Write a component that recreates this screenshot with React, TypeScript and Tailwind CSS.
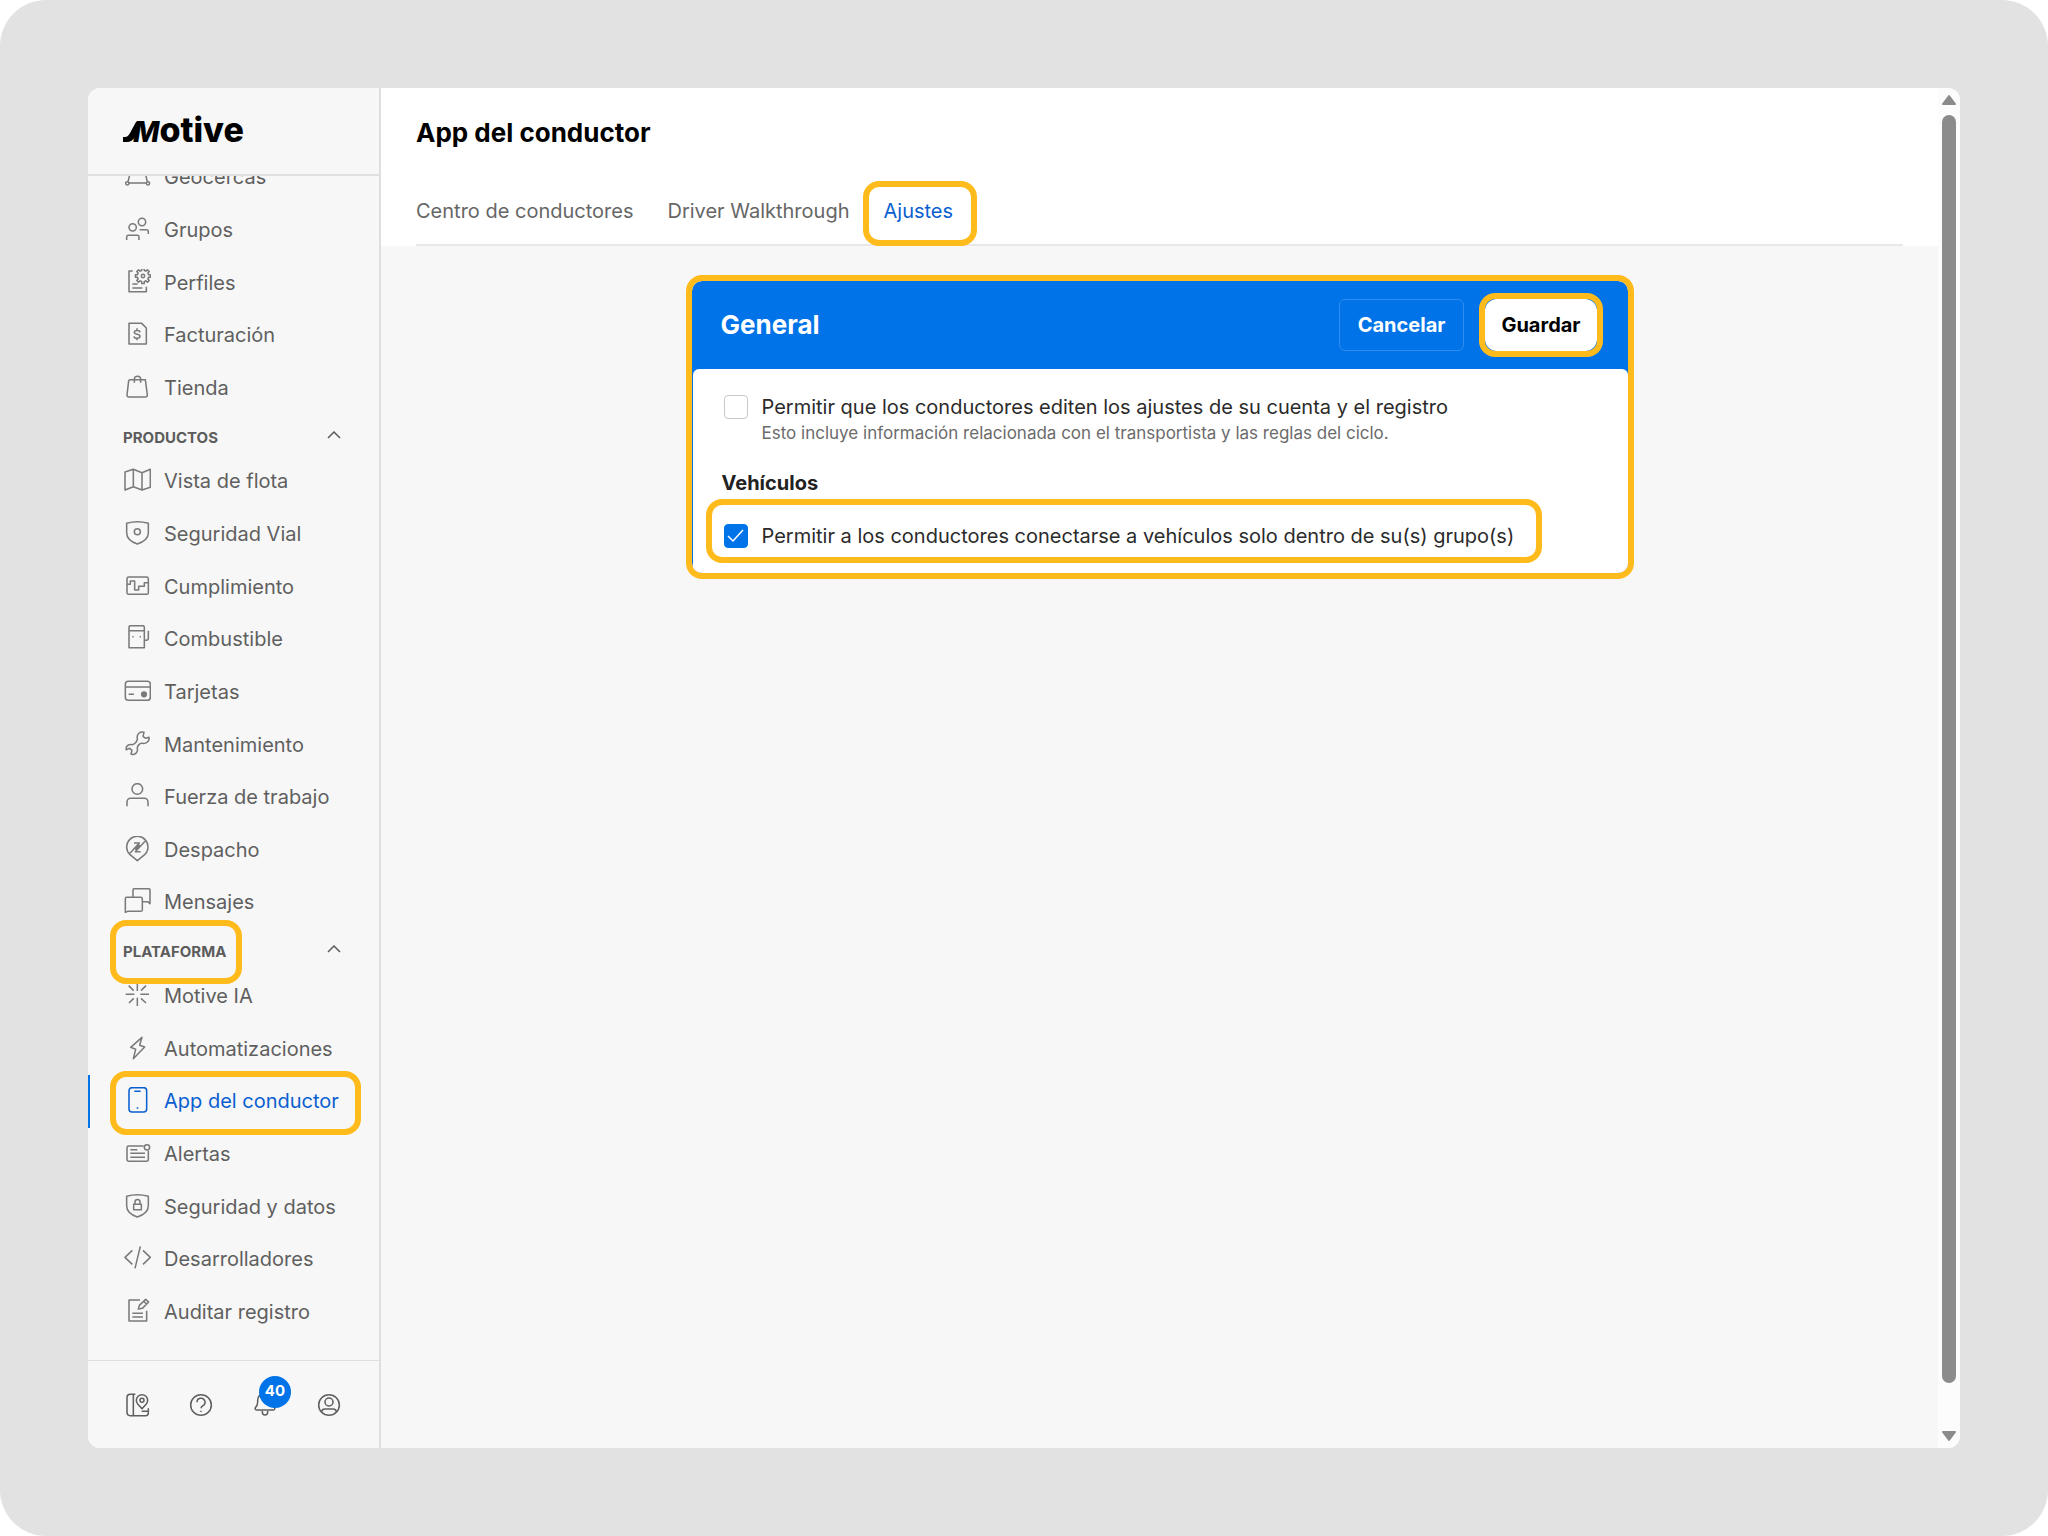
import { useState } from "react";
import type { ReactNode } from "react";
import clsx from "clsx";

const gearPath = (cx: number, cy: number) => {
  const points: string[] = [];
  for (let i = 0; i < 8; i++) {
    const tooth: [number, number][] = [
      [-14, 17],
      [-9, 23],
      [9, 23],
      [14, 17],
    ];
    tooth.forEach(([offset, radius]) => {
      const angle = ((i * 45 + offset) * Math.PI) / 180;
      points.push(
        `${(cx + Math.sin(angle) * radius).toFixed(1)} ${(cy - Math.cos(angle) * radius).toFixed(1)}`,
      );
    });
  }
  return `M${points.join("L")}Z`;
};

const SHIELD = "M11 10Q43 1 76 10V38C76 56 60 66 43 72C26 66 11 56 11 38Z";

const icons: Record<string, ReactNode> = {
  geofence: (
    <>
      <circle cx="13" cy="61" r="5" />
      <circle cx="75" cy="61" r="5" />
      <path d="M18 60H70M15 56L24 20M73 56L64 20" />
    </>
  ),
  groups: (
    <>
      <circle cx="29" cy="34" r="11" />
      <circle cx="57" cy="18" r="11" />
      <path d="M11 72V63a5 5 0 0 1 5-5H43a5 5 0 0 1 5 5V72M50 41H70a6 6 0 0 1 6 6V54" />
    </>
  ),
  profiles: (
    <>
      <path d="M29 6H18V68H70V53M28 45H44M28 57H58" />
      <path d={gearPath(60, 21)} />
      <circle cx="60" cy="21" r="5" />
    </>
  ),
  billing: (
    <path d="M18 7H56L70 21V69H18ZM51 34C50 27 34 27 34 34C34 42 51 38 51 46C51 54 34 54 33 46M42 22V29M42 52V58" />
  ),
  store: (
    <path d="M20 17H67L73 63Q73 69 67 69H18Q12 69 12 63L17 20Q18 17 21 17M34 26V16a9 9 0 0 1 19 0V26" />
  ),
  map: <path d="M6 15L31 7L57 17L82 7V61L57 69L31 59L6 69ZM31 7V59M57 17V69" />,
  safety: (
    <>
      <path d={SHIELD} />
      <circle cx="43" cy="35" r="9" />
    </>
  ),
  compliance: (
    <>
      <rect x="12" y="12" width="64" height="52" rx="5" />
      <path d="M12 34H22V24H35V51H47V40H64V29H76" />
    </>
  ),
  fuel: (
    <>
      <path d="M18 68V7q0-5 5-5h36q5 0 5 5V68ZM18 17H64M66 46H70a6 6 0 0 0 6-6V17" />
      <path d="M28 35H32M50 35H54" />
    </>
  ),
  cards: (
    <>
      <rect x="7" y="10" width="75" height="57" rx="9" />
      <path d="M7 27H82M17 49H33" />
      <circle cx="63" cy="49" r="7" fill="currentColor" />
    </>
  ),
  wrench: (
    <path d="M63 4C52 0 40 9 43 23C44 29 36 40 28 41C16 39 7 46 10 56L20 52L27 58L24 69C34 74 46 64 43 53C42 45 50 36 58 37C70 39 80 30 78 19L68 22L60 16Z" />
  ),
  person: (
    <>
      <circle cx="43" cy="18" r="16" />
      <path d="M12 70V57a11 11 0 0 1 11-11H64a11 11 0 0 1 11 11V70" />
    </>
  ),
  dispatch: (
    <path d="M43 74L20 55A32 32 0 1 1 66 55ZM21 52L49 21H33M66 16L37 47H53M50 26L37 41" />
  ),
  messages: (
    <path d="M7 73V32a4 4 0 0 1 4-4H53a5 5 0 0 1 5 5V65a5 5 0 0 1-5 5H14ZM30 26V6a4 4 0 0 1 4-4H77a4 4 0 0 1 4 4V47L74 41H60" />
  ),
  spark: (
    <path d="M8 37H34M52 37H78M43 3V27M43 47V72M17 11L32 26M69 11L54 26M18 63L32 49M69 63L54 49" />
  ),
  bolt: <path d="M57 7L23 37L38 43L31 71L65 36L50 31Z" />,
  phone: (
    <>
      <rect x="18" y="2" width="53" height="73" rx="9" />
      <path d="M34 13H53M41 63H46" />
    </>
  ),
  alerts: (
    <>
      <path d="M62 18H17a5 5 0 0 0-5 5V58a6 6 0 0 0 6 6H70a6 6 0 0 0 6-6V32M22 29H43M22 40H66M22 52H66" />
      <circle cx="72" cy="22" r="8" />
    </>
  ),
  security: (
    <>
      <path d={SHIELD} />
      <rect x="32" y="34" width="23" height="16" />
      <path d="M36 34V27a7 7 0 0 1 15 0v7" />
    </>
  ),
  code: <path d="M28 16L6 37L28 58M60 16L82 37L60 58M52 4L36 70" />,
  audit: (
    <path d="M51 6H18V69H71V38M28 46H60M28 57H60M46 33L49 22L68 4L77 12L58 31ZM62 10L71 18" />
  ),
  guide: (
    <>
      <path d="M37 10H22a10 10 0 0 0-10 10V64a10 10 0 0 0 10 10H68a8 8 0 0 0 8-8V52M31 10V74M56 61H76" />
      <path d="M57 53L44 39A17 17 0 1 1 70 39Z" />
      <circle cx="57" cy="28" r="6" />
    </>
  ),
  help: (
    <>
      <circle cx="42" cy="42" r="31" />
      <path d="M30 34a12 12 0 1 1 18 10q-6 4-6 8M42 59V63" />
    </>
  ),
  bell: (
    <path d="M13 50Q20 44 20 34V28a22 22 0 0 1 44 0v6Q64 44 71 50Q73 57 66 57H18Q11 57 13 50ZM34 60v4a8 8 0 0 0 16 0v-4" />
  ),
  account: (
    <>
      <circle cx="42" cy="42" r="31" />
      <circle cx="42" cy="33" r="12" />
      <path d="M20 64Q20 54 30 54H54Q64 54 64 64" />
    </>
  ),
};

const Icon = ({ name }: { name: string }) => (
  <svg
    viewBox="0 0 84 84"
    className="size-7 shrink-0"
    fill="none"
    stroke="currentColor"
    strokeWidth="4.6"
    strokeLinejoin="round"
    aria-hidden="true"
  >
    {icons[name]}
  </svg>
);

const sections = [
  {
    title: "",
    items: [
      { label: "Geocercas", icon: "geofence" },
      { label: "Grupos", icon: "groups" },
      { label: "Perfiles", icon: "profiles" },
      { label: "Facturación", icon: "billing" },
      { label: "Tienda", icon: "store" },
    ],
  },
  {
    title: "PRODUCTOS",
    items: [
      { label: "Vista de flota", icon: "map" },
      { label: "Seguridad Vial", icon: "safety" },
      { label: "Cumplimiento", icon: "compliance" },
      { label: "Combustible", icon: "fuel" },
      { label: "Tarjetas", icon: "cards" },
      { label: "Mantenimiento", icon: "wrench" },
      { label: "Fuerza de trabajo", icon: "person" },
      { label: "Despacho", icon: "dispatch" },
      { label: "Mensajes", icon: "messages" },
    ],
  },
  {
    title: "PLATAFORMA",
    marked: true,
    items: [
      { label: "Motive IA", icon: "spark" },
      { label: "Automatizaciones", icon: "bolt" },
      { label: "App del conductor", icon: "phone", active: true },
      { label: "Alertas", icon: "alerts" },
      { label: "Seguridad y datos", icon: "security" },
      { label: "Desarrolladores", icon: "code" },
      { label: "Auditar registro", icon: "audit" },
    ],
  },
];

// Yellow frame that points out a step
const Callout = ({ className }: { className: string }) => (
  <span
    aria-hidden="true"
    className={clsx(
      "pointer-events-none absolute z-10 rounded-2xl border-[6px] border-[#ffbb1c]",
      className,
    )}
  />
);

const Logo = () => (
  <a href="#" className="flex items-baseline text-[34px] leading-9 font-extrabold text-black">
    <svg viewBox="0 0 16 20" className="-mr-1.5 h-5 w-4" aria-hidden="true">
      <path d="M0 15H2Q5 15 7 11L13 0H16V8L12 15Q9 20 4 20H0Z" fill="currentColor" />
    </svg>
    <span>
      <span className="text-[28px] italic">M</span>otive
    </span>
  </a>
);

const Sidebar = () => (
  <aside className="flex w-[293px] shrink-0 flex-col border-r-2 border-[#dfdfdf] bg-[#f7f7f7]">
    <div className="flex h-[88px] shrink-0 items-center border-b-2 border-[#dfdfdf] pl-[35px]">
      <Logo />
    </div>

    <nav className="flex flex-1 flex-col overflow-hidden">
      <div className="-mt-[25px] flex flex-1 flex-col pb-[22px]">
        {sections.map((section) => (
          <div key={section.title} className="contents">
            {section.title && (
              <button className="flex h-[41px] shrink-0 items-center justify-between pr-[38px] pl-[35px] text-[#5c5c5c]">
                <span className="relative mt-1.5 text-[15px] leading-6 font-bold">
                  {section.title}
                  {section.marked && (
                    <Callout className="-top-5 -right-4 -bottom-5 -left-[13px]" />
                  )}
                </span>
                <svg
                  viewBox="0 0 14 8"
                  className="h-2 w-3.5"
                  fill="none"
                  stroke="currentColor"
                  strokeWidth="1.5"
                  aria-hidden="true"
                >
                  <path d="M1 7L7 1L13 7" />
                </svg>
              </button>
            )}
            {section.items.map((item) => (
              <a
                key={item.label}
                href="#"
                className={clsx(
                  "relative flex min-h-10 flex-1 items-center gap-[13px] pl-[35px] text-xl leading-7",
                  item.active ? "text-[#0a5fd0]" : "text-[#5f5f5f]",
                )}
              >
                {item.active && (
                  <>
                    <span className="absolute inset-y-0 left-0 w-0.5 bg-[#0073e8]" />
                    <Callout className="-top-1 right-[18px] -bottom-[7px] left-[22px]" />
                  </>
                )}
                <span className={clsx("flex", !item.active && "text-[#7a7a7a]")}>
                  <Icon name={item.icon} />
                </span>
                <span>{item.label}</span>
              </a>
            ))}
          </div>
        ))}
      </div>
    </nav>

    <div className="flex h-[88px] shrink-0 items-center gap-9 border-t border-[#dfdfdf] pl-[35px] text-[#5f5f5f]">
      <button aria-label="Guía">
        <Icon name="guide" />
      </button>
      <button aria-label="Ayuda">
        <Icon name="help" />
      </button>
      <button aria-label="Notificaciones" className="relative">
        <Icon name="bell" />
        <span className="absolute -top-[15px] left-2 flex size-8 items-center justify-center rounded-full bg-[#0073e8] text-[15px] font-bold text-white">
          40
        </span>
      </button>
      <button aria-label="Cuenta">
        <Icon name="account" />
      </button>
    </div>
  </aside>
);

const tabs = ["Centro de conductores", "Driver Walkthrough", "Ajustes"];

const Header = () => (
  <header className="bg-white px-[35px] pt-[29px]">
    <h1 className="text-[26px] leading-8 font-bold text-black">App del conductor</h1>
    <div className="mt-[47px] flex gap-[34px] border-b-2 border-[#e8e8e8] pb-[18px]">
      {tabs.map((tab) => (
        <button
          key={tab}
          className={clsx(
            "relative text-xl leading-[30px]",
            tab === "Ajustes" ? "text-[#0a5fd0]" : "text-[#666666]",
          )}
        >
          {tab}
          {tab === "Ajustes" && <Callout className="-top-[15px] -right-6 -bottom-5 -left-5" />}
        </button>
      ))}
    </div>
  </header>
);

type CheckProps = {
  id: string;
  checked: boolean;
  onChange: (checked: boolean) => void;
};

const Check = ({ id, checked, onChange }: CheckProps) => (
  <span className="relative flex size-6 shrink-0">
    <input
      id={id}
      type="checkbox"
      checked={checked}
      onChange={(e) => onChange(e.target.checked)}
      className="size-6 cursor-pointer appearance-none rounded-sm border border-[#c8c8c8] bg-white checked:border-[#0073e8] checked:bg-[#0073e8]"
    />
    {checked && (
      <svg
        viewBox="0 0 24 24"
        className="pointer-events-none absolute inset-0"
        fill="none"
        stroke="white"
        strokeWidth="1.5"
        aria-hidden="true"
      >
        <path d="M4 12L9 17L19 6" />
      </svg>
    )}
  </span>
);

const GeneralCard = () => {
  const [allowEdit, setAllowEdit] = useState(false);
  const [onlyGroup, setOnlyGroup] = useState(true);

  return (
    <section className="mx-auto w-full max-w-[948px] overflow-hidden rounded-2xl border-[6px] border-[#ffbb1c] bg-[#0073e8] bg-clip-padding">
      <div className="flex h-[88px] items-center pr-[31px] pl-[29px]">
        <h2 className="flex-1 text-[26px] leading-8 font-bold text-white">General</h2>
        <button className="mr-[21px] h-[52px] rounded-md border border-[#2f8df0] px-[18px] text-xl font-bold text-white">
          Cancelar
        </button>
        <button className="relative h-[52px] rounded-xl bg-white px-4 text-xl font-bold text-black">
          Guardar
          <Callout className="-inset-1.5" />
        </button>
      </div>

      <div className="ml-px rounded-t-md bg-white px-[29px] pt-6 pb-[23px] text-[#2b2b2b]">
        <div className="flex items-start gap-3.5 pl-0.5">
          <span className="pt-0.5">
            <Check id="allow-edit" checked={allowEdit} onChange={setAllowEdit} />
          </span>
          <label htmlFor="allow-edit">
            <span className="block text-xl leading-7">
              Permitir que los conductores editen los ajustes de su cuenta y el registro
            </span>
            <span className="block text-[17px] leading-6 text-[#6b6b6b]">
              Esto incluye información relacionada con el transportista y las reglas del ciclo.
            </span>
          </label>
        </div>

        <h3 className="mt-6 text-xl leading-7 font-bold text-[#222222]">Vehículos</h3>

        <div className="mt-[25px] flex pl-0.5">
          <div className="relative flex items-center gap-3.5">
            <Check id="only-group" checked={onlyGroup} onChange={setOnlyGroup} />
            <label htmlFor="only-group" className="text-xl leading-7">
              Permitir a los conductores conectarse a vehículos solo dentro de su(s) grupo(s)
            </label>
            <Callout className="-top-[23px] -right-7 -bottom-[13px] -left-[18px]" />
          </div>
        </div>
      </div>
    </section>
  );
};

const Arrow = ({ down }: { down?: boolean }) => (
  <svg
    viewBox="0 0 16 12"
    className={clsx("h-3 w-4", down && "rotate-180")}
    fill="#8b8b8b"
    stroke="#8b8b8b"
    strokeWidth="2"
    strokeLinejoin="round"
    aria-hidden="true"
  >
    <path d="M8 2L14 10H2Z" />
  </svg>
);

const Scrollbar = () => (
  <div className="flex w-[22px] shrink-0 flex-col items-center bg-[#fcfcfc] py-1.5">
    <Arrow />
    <div className="mt-[9px] mb-[47px] w-3.5 flex-1 rounded-full bg-[#8b8b8b]" />
    <Arrow down />
  </div>
);

const App = () => {
  return (
    <div className="bg-white">
      <div className="flex min-h-screen rounded-[46px] bg-[#e2e2e2] p-[88px] font-[Inter,sans-serif]">
        <div className="flex min-w-0 flex-1 overflow-hidden rounded-xl bg-[#f7f7f7]">
          <Sidebar />
          <main className="min-w-0 flex-1">
            <Header />
            <div className="px-8 pt-[29px]">
              <GeneralCard />
            </div>
          </main>
          <Scrollbar />
        </div>
      </div>
    </div>
  );
};

export default App;
